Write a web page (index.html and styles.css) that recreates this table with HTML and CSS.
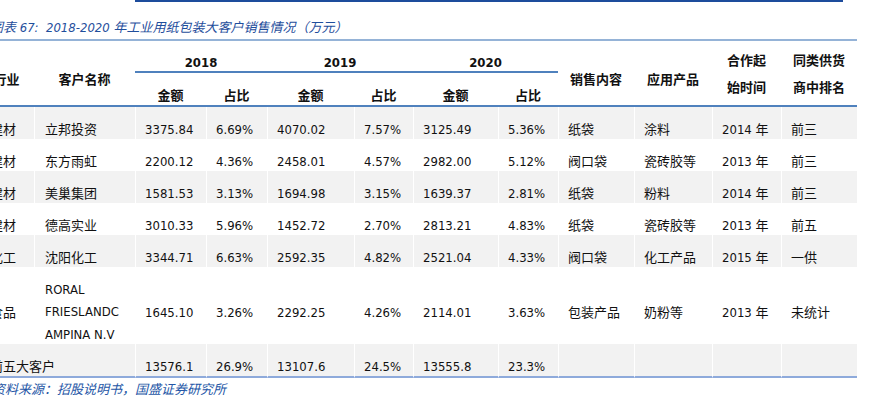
FILE: index.html
```html
<!DOCTYPE html>
<html lang="zh-CN">
<head>
<meta charset="utf-8">
<title>2018-2020 年工业用纸包装大客户销售情况</title>
<link rel="stylesheet" href="styles.css">
</head>
<body>
<div class="page">
  <div class="topbar"></div>
  <div class="caption">图表 67:&nbsp; 2018-2020 年工业用纸包装大客户销售情况（万元）</div>
  <table class="sales">
    <colgroup>
      <col class="c1"><col class="c2"><col class="c3"><col class="c4"><col class="c5"><col class="c6">
      <col class="c7"><col class="c8"><col class="c9"><col class="c10"><col class="c11"><col class="c12">
    </colgroup>
    <thead>
      <tr class="h1">
        <th rowspan="2" class="hb">行业</th>
        <th rowspan="2" class="hb">客户名称</th>
        <th colspan="2" class="year">2018</th>
        <th colspan="2" class="year">2019</th>
        <th colspan="2" class="year">2020</th>
        <th rowspan="2" class="hb">销售内容</th>
        <th rowspan="2" class="hb">应用产品</th>
        <th rowspan="2" class="hb two">合作起<br>始时间</th>
        <th rowspan="2" class="hb two">同类供货<br>商中排名</th>
      </tr>
      <tr class="h2">
        <th class="hb">金额</th><th class="hb">占比</th>
        <th class="hb">金额</th><th class="hb">占比</th>
        <th class="hb">金额</th><th class="hb">占比</th>
      </tr>
    </thead>
    <tbody>
      <tr class="row odd">
        <td class="k1">建材</td><td class="k2">立邦投资</td>
        <td>3375.84</td><td>6.69%</td><td>4070.02</td><td>7.57%</td><td>3125.49</td><td>5.36%</td>
        <td>纸袋</td><td>涂料</td><td>2014 年</td><td>前三</td>
      </tr>
      <tr class="row">
        <td class="k1">建材</td><td class="k2">东方雨虹</td>
        <td>2200.12</td><td>4.36%</td><td>2458.01</td><td>4.57%</td><td>2982.00</td><td>5.12%</td>
        <td>阀口袋</td><td>瓷砖胶等</td><td>2013 年</td><td>前三</td>
      </tr>
      <tr class="row odd">
        <td class="k1">建材</td><td class="k2">美巢集团</td>
        <td>1581.53</td><td>3.13%</td><td>1694.98</td><td>3.15%</td><td>1639.37</td><td>2.81%</td>
        <td>纸袋</td><td>粉料</td><td>2014 年</td><td>前三</td>
      </tr>
      <tr class="row">
        <td class="k1">建材</td><td class="k2">德高实业</td>
        <td>3010.33</td><td>5.96%</td><td>1452.72</td><td>2.70%</td><td>2813.21</td><td>4.83%</td>
        <td>纸袋</td><td>瓷砖胶等</td><td>2013 年</td><td>前五</td>
      </tr>
      <tr class="row odd">
        <td class="k1">化工</td><td class="k2">沈阳化工</td>
        <td>3344.71</td><td>6.63%</td><td>2592.35</td><td>4.82%</td><td>2521.04</td><td>4.33%</td>
        <td>阀口袋</td><td>化工产品</td><td>2015 年</td><td>一供</td>
      </tr>
      <tr class="row tall">
        <td class="k1">食品</td>
        <td class="k2 multi"><div class="lines">RORAL<br>FRIESLANDC<br>AMPINA N.V</div></td>
        <td>1645.10</td><td>3.26%</td><td>2292.25</td><td>4.26%</td><td>2114.01</td><td>3.63%</td>
        <td>包装产品</td><td>奶粉等</td><td>2013 年</td><td>未统计</td>
      </tr>
      <tr class="row odd last">
        <td colspan="2" class="k1">前五大客户</td>
        <td>13576.1</td><td>26.9%</td><td>13107.6</td><td>24.5%</td><td>13555.8</td><td>23.3%</td>
        <td></td><td></td><td></td><td></td>
      </tr>
    </tbody>
  </table>
  <div class="source">资料来源：招股说明书，国盛证券研究所</div>
</div>
</body>
</html>
```

FILE: styles.css
```css
html, body {
  margin: 0;
  padding: 0;
  background: #ffffff;
}

body {
  width: 870px;
  height: 413px;
  overflow: hidden;
  font-family: "DejaVu Sans Condensed", "DejaVu Sans", "Noto Sans CJK SC", sans-serif;
  font-stretch: condensed;
  font-size: 13px;
  color: #111111;
}

.page {
  margin-left: -21px;
  width: 878px;
}

.topbar {
  margin-left: 156px;
  width: 708px;
  height: 2px;
  background: #1d4c9c;
}

.caption {
  box-sizing: border-box;
  height: 39px;
  padding: 16px 0 0 11px;
  line-height: 20px;
  font-size: 13px;
  font-style: italic;
  color: #1f4e9c;
  border-bottom: 2px solid #95b3d7;
  white-space: nowrap;
}

.sales {
  table-layout: fixed;
  border-collapse: separate;
  border-spacing: 0;
  width: 878px;
}

.c1 { width: 55px; }
.c2 { width: 101px; }
.c3 { width: 71px; }
.c4 { width: 61px; }
.c5 { width: 87px; }
.c6 { width: 59px; }
.c7 { width: 85px; }
.c8 { width: 60px; }
.c9 { width: 76px; }
.c10 { width: 78px; }
.c11 { width: 69px; }
.c12 { width: 76px; }

.sales th {
  font-weight: bold;
  text-align: center;
  vertical-align: middle;
  padding: 13px 0 0 0;
  line-height: 17px;
  white-space: nowrap;
  color: #111111;
}

.sales th.two {
  padding-top: 2px;
  line-height: 27px;
}

.h1 { height: 32px; }
.h2 { height: 34px; }

.sales th.year {
  border-bottom: 2px solid #4f81bd;
}

.sales th.hb {
  border-bottom: 2px solid #4f81bd;
}

.sales td {
  padding: 14px 0 0 9px;
  vertical-align: middle;
  line-height: 18px;
  white-space: nowrap;
  border-left: 1px solid #ffffff;
}

.sales td:first-child {
  border-left: 0;
}

.sales td.k1 {
  padding-left: 11px;
}

.sales td.k2 {
  padding-left: 10px;
}

.row { height: 32px; }
.row.odd td { background: #f2f2f2; }
.row.tall { height: 77px; }
.row.last { height: 34px; }
.row.last td { border-bottom: 2px solid #8eaadb; }

.sales td.multi {
  padding-top: 14px;
}

.lines {
  height: 63px;
  display: flex;
  flex-direction: column;
  justify-content: center;
  line-height: 22.5px;
}

.source {
  margin-top: 2px;
  padding-left: 13px;
  line-height: 20px;
  font-size: 13px;
  font-style: italic;
  color: #2456a6;
  white-space: nowrap;
}
```
